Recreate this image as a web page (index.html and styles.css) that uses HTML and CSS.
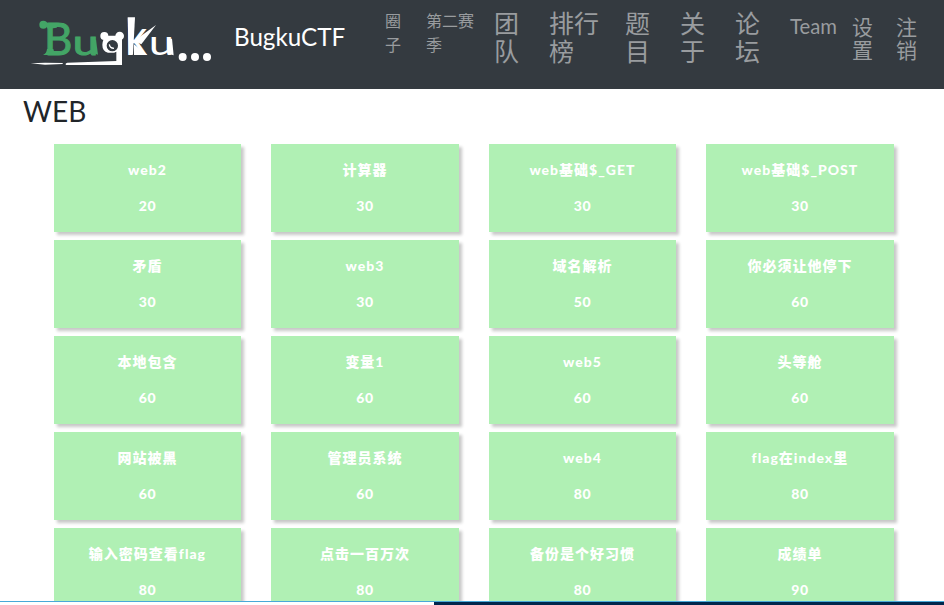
FILE: index.html
```
<!DOCTYPE html>
<html lang="zh-CN">
<head>
<meta charset="utf-8">
<title>BugkuCTF</title>
<link rel="stylesheet" href="styles.css">
</head>
<body>
<header class="navbar">
  <svg class="logo" viewBox="0 0 600 225" role="img" aria-label="Bugku">
    <g class="logo-green">
      <circle cx="70" cy="59" r="12"/>
      <path d="M70 49Q98 62 116 54L110 68L84 72Z"/>
      <path d="M69 150Q80 145 81 132H100Q100 142 118 150Z"/>
      <text x="72" y="149" font-size="134" textLength="85" lengthAdjust="spacingAndGlyphs">B</text>
      <text x="158" y="149" font-size="104" textLength="77" lengthAdjust="spacingAndGlyphs">u</text>
      <path d="M218 104H228L234 149L222 145Z"/>
    </g>
    <g class="logo-white">
      <circle cx="253" cy="93" r="12"/>
      <circle cx="299" cy="93" r="13"/>
      <path fill-rule="evenodd" d="M258 92H306V180H138Q134 175 142 173L289 168V140Q281 145 264 143Q247 139 247 119Q247 105 258 92ZM277 105A17 17 0 1 0 277 139A17 17 0 1 0 277 105Z"/>
      <path class="glint" d="M268 118Q269 129 282 130"/>
      <path d="M32 175L75 173L128 174V177L75 179Z"/>
      <text x="316" y="149" font-size="151" textLength="66" lengthAdjust="spacingAndGlyphs">k</text>
      <path d="M323 37H345L339 149H326Z"/>
      <path d="M342 108L408 60L364 118Z"/>
      <path d="M342 118L382 150H342Z"/>
      <text x="386" y="149" font-size="104" textLength="76" lengthAdjust="spacingAndGlyphs">u</text>
      <path d="M441 101H456L461 151L446 147Z"/>
      <circle cx="488" cy="156" r="12"/>
      <circle cx="525" cy="156" r="12"/>
      <circle cx="561" cy="156" r="12"/>
    </g>
  </svg>
  <a class="brand">BugkuCTF</a>
  <nav class="menu">
    <a class="item small one">圈子</a>
    <a class="item small three">第二赛季</a>
    <a class="item large one">团队</a>
    <a class="item large two">排行榜</a>
    <a class="item large one">题目</a>
    <a class="item large one">关于</a>
    <a class="item large one">论坛</a>
    <a class="item team">Team</a>
    <a class="item medium one">设置</a>
    <a class="item medium one">注销</a>
  </nav>
</header>
<main class="content">
  <h3 class="category">WEB</h3>
  <div class="challenges">
    <div class="card"><p>web2</p><span>20</span></div>
    <div class="card"><p>计算器</p><span>30</span></div>
    <div class="card"><p>web基础$_GET</p><span>30</span></div>
    <div class="card"><p>web基础$_POST</p><span>30</span></div>
    <div class="card"><p>矛盾</p><span>30</span></div>
    <div class="card"><p>web3</p><span>30</span></div>
    <div class="card"><p>域名解析</p><span>50</span></div>
    <div class="card"><p>你必须让他停下</p><span>60</span></div>
    <div class="card"><p>本地包含</p><span>60</span></div>
    <div class="card"><p>变量1</p><span>60</span></div>
    <div class="card"><p>web5</p><span>60</span></div>
    <div class="card"><p>头等舱</p><span>60</span></div>
    <div class="card"><p>网站被黑</p><span>60</span></div>
    <div class="card"><p>管理员系统</p><span>60</span></div>
    <div class="card"><p>web4</p><span>80</span></div>
    <div class="card"><p>flag在index里</p><span>80</span></div>
    <div class="card"><p>输入密码查看flag</p><span>80</span></div>
    <div class="card"><p>点击一百万次</p><span>80</span></div>
    <div class="card"><p>备份是个好习惯</p><span>80</span></div>
    <div class="card"><p>成绩单</p><span>90</span></div>
  </div>
</main>
<footer class="edge"></footer>
</body>
</html>
```
FILE: styles.css
```
* { box-sizing: border-box; }
body {
  margin: 0;
  height: 605px;
  display: flex;
  flex-direction: column;
  overflow: hidden;
  background: #fff;
  color: #212529;
  font-family: Lato, "Noto Sans CJK SC", sans-serif;
}
.navbar {
  flex: none;
  height: 89px;
  display: flex;
  align-items: flex-start;
  padding-left: 20px;
  background: #343a40;
}
.logo { flex: none; width: 200px; height: 75px; margin-top: 5px; }
.logo text { font-family: Lato, sans-serif; font-weight: 400; }
.logo-green { fill: #43a566; }
.logo-green text { stroke: #43a566; stroke-width: 3; }
.logo-white { fill: #fff; }
.glint { fill: none; stroke: #fff; stroke-width: 4; }
.brand {
  width: 151px;
  margin: 19px 0 0 14px;
  color: #fff;
  font-size: 24.2px;
  line-height: 36px;
}
.menu { display: flex; align-items: flex-start; color: #999c9f; }
.item { flex: none; margin-right: 30px; word-break: break-all; }
.small { font-size: 16px; line-height: 24px; margin-top: 9px; margin-right: 25px; }
.small.one { width: 16px; }
.three { width: 48px; margin-right: 20px; }
.large { font-size: 25px; line-height: 28px; margin-top: 9px; }
.large.one { width: 25px; }
.two { width: 50px; margin-right: 26px; }
.team { width: 47px; font-size: 20.3px; line-height: 24px; margin: 14px 15px 0 0; }
.medium { width: 21px; font-size: 21px; line-height: 23px; margin: 15px 23px 0 0; }
.content { flex: 1; min-height: 0; overflow: hidden; }
.category { margin: 5px 0 0 23px; font-size: 28px; font-weight: 400; line-height: 34px; }
.challenges {
  display: grid;
  grid-template-columns: repeat(4, 187.5px);
  grid-auto-rows: 88px;
  column-gap: 30px;
  row-gap: 8px;
  margin: 16px 0 0 53.7px;
}
.card {
  padding-top: 15px;
  background: #b0f0b4;
  box-shadow: 3px 3px 3px #c8c8c8;
  color: #fff;
  text-align: center;
  font-size: 14px;
  font-weight: 900;
  line-height: 22px;
  letter-spacing: 1px;
}
.card p { margin: 0 0 14px; }
.card span { display: block; letter-spacing: .5px; }
.edge {
  flex: none;
  height: 4px;
  border-top: 1px solid #48a9d8;
  background: linear-gradient(to right, #fff 434px, #00264c 434px);
}
```
